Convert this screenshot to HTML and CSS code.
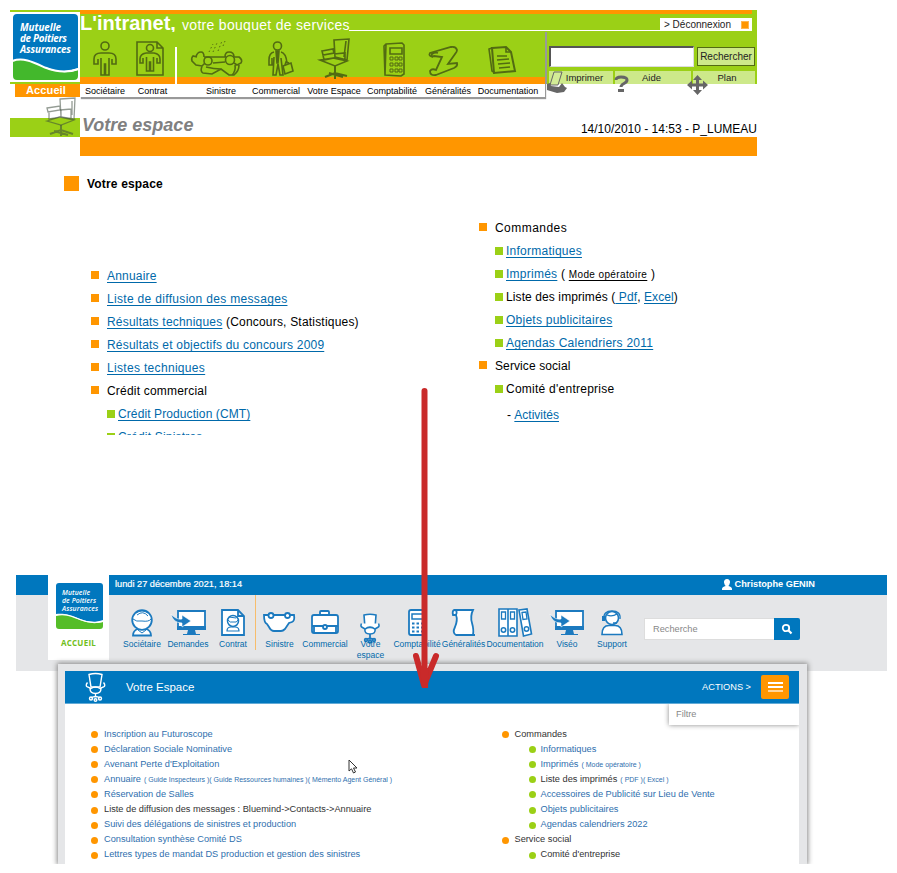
FILE: index.html
```html
<!DOCTYPE html>
<html lang="fr">
<head>
<meta charset="utf-8">
<title>Intranet - Votre espace</title>
<link rel="stylesheet" href="styles.css">
</head>
<body>
<section class="old">
  <header class="top">
    <div class="brand">
      <svg class="brand-logo" width="70" height="74" viewBox="10 10 70 74">
        <path fill="#9bd016" d="M10 10h70v2H10zM10 82h70v2H10z"/>
        <path fill="#0077be" d="M17 14H74q4 0 4 4V68C66 73 55 71 45 67C33 62 23 57 13 60V18q0-4 4-4z"/>
        <path fill="#43b82c" d="M13 61C23 57 33 62 45 68C55 72 66 74 78 70V76q0 4-4 4H17q-4 0-4-4z"/>
        <path fill="none" stroke="#fff" stroke-width="2" d="M12.500 61C23 57 33 62 45 67.500C55 71.500 66 73.500 78.500 69"/>
        <g class="logo-text">
          <text x="20" y="30.500" textLength="41">Mutuelle</text>
          <text x="20" y="42" textLength="47">de Poitiers</text>
          <text x="20" y="53" textLength="51">Assurances</text>
        </g>
      </svg>
      <div class="home">Accueil</div>
      <div class="chair-box">
        <svg width="70" height="40" viewBox="10 97 70 40" fill="none" stroke="#3d4a3d" stroke-opacity=".55" stroke-width="1.300">
          <path fill="#fff" fill-opacity=".5" d="M60 99l15-1-1 21-13-2zM47 108l13-2v4l-12 2zM49 112v7l12-2v-7"/>
          <path fill="#9bd016" fill-opacity=".5" d="M47 121l13-4 14 3-13 5z"/>
          <path d="M72 101v14M60 110l11-1v9"/>
          <path stroke-width="2" d="M61 125v6M50 134l11-4 12 4M61 131v5M54 131l14 4"/>
        </svg>
      </div>
    </div>
    <div class="mast">
      <div class="stripe"></div>
      <div class="titlebar">
        <strong>L'intranet,</strong><span class="tagline">votre bouquet de services</span>
        <i class="rule"></i>
        <div class="logout">&gt; Déconnexion <i></i></div>
      </div>
      <div class="mast-row">
        <nav class="onav">
          <a class="w50"><svg width="50" height="52" viewBox="80 32 50 52"><circle cx="105" cy="46" r="4"/><path d="M101 53h8q7 0 7 6v5h-4v-5M101 53q-7 0-7 6v5h4v-5M101 58v17h3.500V64h1v11h3.500V58"/></svg><span>Sociétaire</span></a>
          <a class="w45"><svg width="45" height="52" viewBox="130 32 45 52"><path d="M137 42h20l6 6v27h-26zM157 42v6h6"/><circle cx="150" cy="48" r="3.500"/><path d="M146 53h8q6 1 6 6v4h-3v-5M146 53q-6 1-6 6v4h3v-5M146.500 57v14h3V62h1v9h3V57"/></svg><span>Contrat</span></a>
          <i class="sep"></i>
          <a class="w71"><svg width="71" height="52" viewBox="177 32 71 52"><path d="M204 57h22M197 57l-4-1q-2 2-1 5l4 4 6 1 3-3M196 57q1-5 5-5 3 0 3 5M225 57q0-5 4-5 5 0 5 5h5q4 3 2 6l-4 2-3-2M202 66q-2 6 1 7l9 1 9-5 8 6h5q5-4 5-10M213 63l12-1M206 67q8 2 15 2M232 75q4-4 3-10"/><circle cx="208" cy="61" r="4"/><circle cx="230" cy="60" r="4.500"/><path stroke-dasharray="1.500 2.500" stroke-width="1" d="M209 52l4-8M213 52l4-9M218 51l4-10M223 46l2-5"/></svg><span class="shift">Sinistre</span></a>
          <a class="w56"><svg width="56" height="52" viewBox="248 32 56 52"><circle cx="277.500" cy="46" r="4"/><path d="M274 52q-5 1-5 8v5h3v-7M281 52q5 1 6 11M274 57l-1 18h3l2-11 2 11h3l-2-17"/><path fill="#526b12" d="M276 51h3l-1 12h-1z"/><path d="M283 66l8-3 2 8-8 3zM285 65l1-3 3 1"/></svg><span>Commercial</span></a>
          <a class="w60"><svg width="60" height="52" viewBox="304 32 60 52"><path d="M334 40l15-1-2 21-12-3zM346 41l-2 16M322 51l11-2 1 4-11 2zM323 55l1 5 10-2M320 60l13-2 14 3-12 5zM334 54l11-1v6"/><path stroke-width="2" d="M335 66v7M325 77l10-4 12 3M335 72v7M329 73l14 4"/></svg><span>Votre Espace</span></a>
          <a class="w56"><svg width="56" height="52" viewBox="364 32 56 52"><path d="M386 44l16-1 2 2v29l-3 2-16-1-1-29zM386 44l-1 31M390 48h12v6h-12z"/><path stroke-width="1" d="M390 57h3v3h-3zM395 57h3v3h-3zM399 57h3v3h-3zM390 63h3v3h-3zM395 63h3v3h-3zM399 63h3v3h-3zM390 69h3v3h-3zM395 69h3v3h-3zM399 69h3v3h-3z"/></svg><span>Comptabilité</span></a>
          <a class="w56"><svg width="56" height="52" viewBox="420 32 56 52"><path stroke-width="1.800" d="M433 57q-5-1-3-4l21-6q5-1 6 3 0 2-2 4l-7 10 9-1q1 3-3 5l-18 7q-6 1-6-4 2-3 6-1l6-13-8-1q-3 2-2-2 3-2 6-1"/></svg><span>Généralités</span></a>
          <a class="w64"><svg width="64" height="52" viewBox="476 32 64 52"><path stroke-width="2" d="M492 48l14-1 5 5 4 19-21 2z"/><path d="M492 48l-3 1 3 22 3 2M506 47v5h5M497 56h10M497 60l12-1M498 64l12-1M499 68l11-1"/></svg><span>Documentation</span></a>
        </nav>
        <div class="tools">
          <div class="find"><div class="find-box"></div><button>Rechercher</button></div>
          <div class="tabs"><span>Imprimer</span><span>Aide</span><span>Plan</span></div>
          <svg class="tool-icons" width="210" height="28" viewBox="547 70 210 28">
            <path fill="#d3ec96" stroke="#666" stroke-width="1" d="M554 72l8 0-4 13-8 0z"/>
            <path fill="#666" d="M547 84l3-1 1 3 8 1 3-4 3 4 2 1-3 4-7 1-10-3z"/>
            <path fill="none" stroke="#666" stroke-width="3" d="M616 80q0-3 5-3 6 0 6 3c0 4-6 3-6 7"/><path fill="#666" d="M618 89h6v3h-6z"/>
            <path fill="#666" d="M697.500 75l4.500 5h-3v3.500h4v-3l5 4.500-5 4.500v-3h-4v3.500h3l-4.500 5-4.500-5h3v-3.500h-4v3l-5-4.500 5-4.500v3h4V80h-3z"/>
          </svg>
        </div>
      </div>
      <div class="crumb"><h1>Votre espace</h1><p>14/10/2010 - 14:53 - P_LUMEAU</p></div>
    </div>
  </header>
  <div class="bar"></div>
  <h2><i></i>Votre espace</h2>
  <div class="cols">
    <ul class="left">
      <li><a>Annuaire</a></li>
      <li class="wide"><a>Liste de diffusion des messages</a></li>
      <li><a>Résultats techniques</a>&nbsp;(Concours, Statistiques)</li>
      <li><a>Résultats et objectifs du concours 2009</a></li>
      <li class="wide"><a>Listes techniques</a></li>
      <li>Crédit commercial</li>
      <li class="sub tight"><a>Crédit Production (CMT)</a></li>
      <li class="sub"><a>Crédit Sinistres</a></li>
    </ul>
    <ul class="right">
      <li class="wider">Commandes</li>
      <li class="sub"><a>Informatiques</a></li>
      <li class="sub"><a>Imprimés</a>&nbsp;(&nbsp;<a class="mini">Mode opératoire</a>&nbsp;)</li>
      <li class="sub tight">Liste des imprimés (<a>&nbsp;Pdf</a>,&nbsp;<a>Excel</a>)</li>
      <li class="sub"><a>Objets publicitaires</a></li>
      <li class="sub"><a>Agendas Calendriers 2011</a></li>
      <li class="tight">Service social</li>
      <li class="sub">Comité d'entreprise</li>
      <li class="dash">-&nbsp;<a>Activités</a></li>
    </ul>
  </div>
</section>

<section class="new">
  <header class="head">
    <div class="card">
      <svg width="61" height="60" viewBox="48 575 61 60">
        <path fill="#0077be" d="M59 583H100q3 0 3 3V620C95 623 88 622 80 619C70 615 64 613 56 614V586q0-3 3-3z"/>
        <path fill="#55bd28" d="M56 615.500C64 613 71 616 80 620C88 623 95 624 103 622V626q0 3-3 3H59q-3 0-3-3z"/>
        <path fill="none" stroke="#fff" stroke-width="1.200" d="M56 615.500C64 613 71 616 80 619.500C88 623 95 623.500 103 621.500"/>
        <g class="logo-text small">
          <text x="62" y="595" textLength="28">Mutuelle</text>
          <text x="62" y="603" textLength="34">de Poitiers</text>
          <text x="62" y="610.500" textLength="36">Assurances</text>
        </g>
      </svg>
      <b>ACCUEIL</b>
    </div>
    <div class="head-main">
      <div class="bluebar">
        <span>lundi 27 décembre 2021, 18:14</span>
        <b><svg width="10" height="11" viewBox="0 0 10 11"><path fill="#fff" d="M5 0a3 3 0 0 1 3 3.500Q7.500 6 6.300 7q3.700.8 3.700 3v1H0v-1q0-2.200 3.700-3Q2.500 6 2 3.500A3 3 0 0 1 5 0z"/></svg>Christophe GENIN</b>
      </div>
      <div class="greybar">
        <nav class="nnav">
          <a class="n46"><svg width="46" height="44" viewBox="119 595 46 44"><path d="M133 635.500q0-5 5-6.500h8q5 1.500 5 6.500z"/><circle cx="142" cy="620" r="9.800"/><path fill="none" stroke-width="1" d="M133 619q3 3 9 2 7 1 9-2M137 615q6-5 11 1M136 613q6-4 12 0M138 630l4 3 4-3"/></svg><span>Sociétaire</span></a>
          <a class="n46"><svg width="46" height="44" viewBox="165 595 46 44"><path d="M178 611h27v18h-27z"/><path class="fill" d="M177 626h29v4h-29zM188 630h7l1 4h4v1h-17v-1h4z"/><path class="fill halo" d="M171 614q5 6 11 5v-4l9 6-9 6v-4q-9 0-11-9z"/></svg><span>Demandes</span></a>
          <a class="n44"><svg width="44" height="44" viewBox="211 595 44 44"><path d="M222 610h16l6 6v19h-22zM238 610v6h6"/><path stroke-width="1.200" d="M227 631q0-4 4-4h4q4 0 4 4z"/><circle stroke-width="1.500" cx="233" cy="621" r="5.500"/><path stroke-width="1" fill="none" d="M228 620q2 3 5 2 4 1 5-2M229 617l7 1"/></svg><span>Contrat</span></a>
          <i></i>
          <a class="n45"><svg width="45" height="44" viewBox="257 595 45 44"><path d="M264 615h30q1 6-2 7l-3 1-4 6q-2 2-4 2h-7q-3 0-5-4l-2-3q-3-1-3-9z"/><circle cx="271" cy="615.500" r="2.500"/><circle cx="287.500" cy="615.500" r="2.500"/></svg><span>Sinistre</span></a>
          <a class="n46"><svg width="46" height="44" viewBox="302 595 46 44"><path d="M320 615v-3q0-1 1-1h7q1 0 1 1v3"/><rect x="312" y="615" width="26" height="18" rx="2"/><path fill="none" d="M312 626h26M314 626v7M336 626v7"/><circle cx="325" cy="627" r="2"/></svg><span>Commercial</span></a>
          <a class="n45"><svg width="45" height="44" viewBox="348 595 45 44"><path stroke-width="1.600" d="M364 615q6-1.500 12 0l-1 13h-10z"/><path stroke-width="1.600" d="M361.500 623.500q-1.500 3 1 4l2.500 1.500q5-4 10 0l2.500-1.500q2.500-1 1-4M365 629q-1 5 5 5t5-5q-5-3-10 0z"/><path fill="none" d="M370 634v5M365 640q5-3 10 0"/><circle cx="366" cy="640" r="1.300"/><circle cx="370" cy="641.500" r="1.300"/><circle cx="374" cy="640" r="1.300"/></svg><span>Votre<br>espace</span></a>
          <a class="n48"><svg width="48" height="44" viewBox="393 595 48 44"><rect x="409" y="610" width="17" height="25" rx="2"/><path stroke-width="1.500" d="M412 614h12v5h-12z"/><path class="dots" d="M412 623.500h12M412 627.500h12M412 631.500h12"/></svg><span>Comptabilité</span></a>
          <a class="n45"><svg width="45" height="44" viewBox="441 595 45 44"><path d="M454 610h19q-3 6-1 13t1 12h-17q-4-2-1-8 3-7 1-12h-3q-1-4 1-5z"/><path fill="none" d="M454 610q4 0 2 5M471 635h4"/></svg><span>Généralités</span></a>
          <a class="n58"><svg width="58" height="44" viewBox="486 595 58 44"><path stroke-width="1.600" d="M499 609h9v27h-9zM508 609h9v27h-9z"/><path stroke-width="1.600" d="M519 610l8-1 4.500 25-8 2z"/><path stroke-width="1.300" d="M501.500 612h4v7h-4zM510.500 612h4v7h-4zM522 612.500l4-.5 1 7-4 .5z"/><circle stroke-width="1.500" cx="503.500" cy="630" r="2.200"/><circle stroke-width="1.500" cx="512.500" cy="630" r="2.200"/><circle stroke-width="1.500" cx="526.500" cy="629" r="2.200"/></svg><span>Documentation</span></a>
          <a class="n46"><svg width="46" height="44" viewBox="544 595 46 44"><path d="M556 611h27v18h-27z"/><path class="fill" d="M555 626h29v4h-29zM566 630h7l1 4h4v1h-17v-1h4z"/><path class="fill halo" d="M550 614q5 6 11 5v-4l9 6-9 6v-4q-9 0-11-9z"/></svg><span>Viséo</span></a>
          <a class="n44"><svg width="44" height="44" viewBox="590 595 44 44"><path stroke-width="1.600" d="M602 634.500q0-9 7-9h6q7 0 7 9z"/><circle stroke-width="1.600" cx="612" cy="618" r="6.500"/><path stroke-width="1.300" fill="none" d="M604 619q-1-8 8-8t8 8M607 615q5 2 10-1M613 623h4"/><path class="fill" d="M602 616h3v5h-3z"/></svg><span>Support</span></a>
        </nav>
        <div class="search"><span>Recherche</span><button><svg width="10" height="10" viewBox="0 0 10 10" fill="none" stroke="#fff" stroke-width="1.800"><circle cx="4" cy="4" r="3.200"/><path stroke-width="2.200" d="M6.300 6.300l3.200 3.200"/></svg></button></div>
      </div>
    </div>
  </header>
  <main class="panel">
    <div class="panel-head">
      <svg width="22" height="30" viewBox="0 0 22 30" fill="none" stroke="#fff" stroke-width="1.400"><path d="M4 2.500q6.500-2 13 0l-2 12.500h-9z"/><path d="M2.500 10.500q-2.500 3 0 4.500l3.500 1.500q4.500-3 9 0l3.500-1.500q2.500-1.500 0-4.500M5 16.500q0 5 5.500 5t5.500-5M10.500 21.500v4M6 26q4.500-3 9 0"/><circle cx="6" cy="26.500" r="1.500"/><circle cx="10.500" cy="28" r="1.300"/><circle cx="15" cy="26.500" r="1.500"/></svg>
      <h3>Votre Espace</h3>
      <span>ACTIONS &gt;</span>
      <button><i></i><i></i><i></i></button>
      <div class="filter">Filtre</div>
    </div>
    <div class="panel-body">
      <ul>
        <li><a>Inscription au Futuroscope</a></li>
        <li><a>Déclaration Sociale Nominative</a></li>
        <li><a>Avenant Perte d'Exploitation</a></li>
        <li><a>Annuaire</a><small>( Guide Inspecteurs )( Guide Ressources humaines )( Mémento Agent Général )</small></li>
        <li><a>Réservation de Salles</a></li>
        <li>Liste de diffusion des messages : Bluemind-&gt;Contacts-&gt;Annuaire</li>
        <li><a>Suivi des délégations de sinistres et production</a></li>
        <li><a>Consultation synthèse Comité DS</a></li>
        <li><a>Lettres types de mandat DS production et gestion des sinistres</a></li>
      </ul>
      <ul>
        <li>Commandes</li>
        <li class="sub"><a>Informatiques</a></li>
        <li class="sub"><a>Imprimés</a><small>( Mode opératoire )</small></li>
        <li class="sub">Liste des imprimés<small>( PDF )( Excel )</small></li>
        <li class="sub"><a>Accessoires de Publicité sur Lieu de Vente</a></li>
        <li class="sub"><a>Objets publicitaires</a></li>
        <li class="sub"><a>Agendas calendriers 2022</a></li>
        <li>Service social</li>
        <li class="sub">Comité d'entreprise</li>
      </ul>
    </div>
  </main>
</section>

<svg class="arrow" width="32" height="302" viewBox="409 388 32 302" fill="none" stroke="#c92a2a" stroke-linecap="round">
  <path stroke-width="6" d="M424.500 391V684"/>
  <path stroke-width="6" stroke-linejoin="round" d="M416 656L424 685L436 656"/>
  <path fill="#c92a2a" stroke="none" d="M420 668h9l-1 20h-6z"/>
</svg>
<svg class="cursor" width="10" height="16" viewBox="0 0 10 16"><path fill="#fff" stroke="#333" d="M1 1v11l2.500-2.200L5.500 14l2-1-2-4H9z"/></svg>
</body>
</html>
```
FILE: styles.css
```css
* { box-sizing: border-box; }
body {
  position: relative;
  margin: 0;
  width: 897px;
  height: 873px;
  overflow: hidden;
  background: #fff;
  color: #000;
  font: 12px "Liberation Sans", Arial, sans-serif;
}
h1, h2, h3, p, ul { margin: 0; padding: 0; }
ul { list-style: none; }
svg { display: block; overflow: visible; }
button { border: 0; padding: 0; font: inherit; }
.logo-text { font: italic 700 9.800px "Open Sans", "Noto Sans", sans-serif; fill: #fff; }
.logo-text.small { font-size: 6.800px; font-weight: 600; }

/* Former intranet */
.old { margin: 10px 0 0 10px; width: 747px; height: 425px; overflow: hidden; }
.top { display: flex; height: 127px; }
.brand { width: 70px; }
.home {
  margin-left: 5px;
  height: 13px;
  line-height: 13px;
  padding-right: 3px;
  text-align: center;
  background: #ff9600;
  color: #fff;
  font-size: 11px;
  font-weight: bold;
  letter-spacing: .1px;
}
.chair-box { height: 40px; background: linear-gradient(#fff 21px, #9bd016 21px); }
.mast { width: 677px; }
.stripe { height: 4px; background: linear-gradient(90deg, #ff9600 672px, #9bd016 672px); }
.titlebar { display: flex; height: 18px; padding-right: 5px; background: #9bd016; color: #fff; white-space: nowrap; }
.titlebar strong { width: 102px; font-size: 20px; line-height: 19px; }
.tagline { width: 167px; font-size: 14px; line-height: 22px; letter-spacing: .3px; }
.rule { flex: 1; height: 1px; margin-top: 16px; background: #fff; }
.logout {
  display: flex;
  align-items: center;
  justify-content: space-between;
  width: 92px;
  height: 13px;
  margin-top: 4px;
  padding: 0 3px 0 4px;
  background: #fff;
  color: #222;
  font-size: 10px;
}
.logout i { width: 8px; height: 8px; background: #ff9600; border: 1px solid #ffb650; }
.mast-row { display: flex; height: 67px; }
.onav {
  display: flex;
  width: 465px;
  height: 65px;
  background: linear-gradient(#9bd016 45px, #ff9600 45px, #ff9600 52px, #fff 52px);
  box-shadow: 1px 2px 1px #999;
  position: relative;
  z-index: 1;
}
.onav a { text-align: center; white-space: nowrap; }
.onav svg { fill: none; stroke: #526b12; stroke-width: 1.600; }
.onav span { display: block; font-size: 9px; line-height: 14px; }
.onav .shift { padding-left: 17px; }
.sep { width: 2px; height: 37px; margin-top: 15px; background: #fff; }
.w45 { width: 45px; } .w50 { width: 50px; } .w56 { width: 56px; }
.w60 { width: 60px; } .w64 { width: 64px; } .w71 { width: 71px; }
.tools { position: relative; z-index: 2; width: 212px; height: 52px; padding: 14px 2px 0 4px; background: linear-gradient(90deg, #999 2px, #9bd016 2px); }
.find { display: flex; align-items: center; justify-content: space-between; height: 21px; }
.find-box { width: 145px; height: 21px; background: #fff; border: solid #555; border-width: 2px 1px 1px 2px; border-right-color: #ddd; border-bottom-color: #ddd; }
.find button { width: 58px; height: 19px; border: 1px solid #526b12; background: #cde98a; color: #222; font-size: 10px; }
.tabs { display: flex; gap: 2px; height: 13px; margin-top: 4px; }
.tabs span { background: #cde98a; font-size: 9.500px; line-height: 14px; text-align: center; color: #222; }
.tabs span:nth-child(1) { width: 64px; padding-left: 7px; }
.tabs span:nth-child(2) { width: 76px; padding-right: 3px; }
.tabs span:nth-child(3) { width: 62px; padding-left: 6px; }
.tool-icons { position: absolute; left: 2px; top: 38px; }
.crumb { display: flex; justify-content: space-between; height: 38px; padding-left: 2px; }
.crumb h1 { font-size: 18px; font-style: italic; line-height: 52px; color: #808080; }
.crumb p { line-height: 61px; }
.bar { height: 19px; margin-left: 70px; background: #ff9600; }
.old h2 { display: flex; align-items: center; gap: 8px; height: 15px; margin: 20px 0 0 54px; font-size: 12px; letter-spacing: .17px; }
.old h2 i { width: 15px; height: 15px; background: #ff9600; }
.cols { display: flex; justify-content: space-between; padding: 25px 47px 0 81px; }
.left { width: 388px; padding-top: 48px; letter-spacing: .2px; }
.right { width: 231px; letter-spacing: .25px; }
.cols li { display: flex; align-items: center; height: 23px; white-space: nowrap; }
.cols li::before { content: ""; width: 8px; height: 8px; margin: 0 8px 1px 0; background: #ff9600; }
.cols .sub::before { margin: 1px 3px 0 16px; background: #9bd016; }
.cols .wide { letter-spacing: .32px; }
.cols .wider { letter-spacing: .45px; }
.cols .tight { letter-spacing: .1px; }
.cols .dash { height: 29px; padding-left: 28px; letter-spacing: 0; }
.cols .dash::before { display: none; }
.cols a { color: #0069aa; text-decoration: underline; text-underline-offset: 2px; text-decoration-skip-ink: none; }
.cols .mini { margin-top: 2px; color: #000; font-size: 10px; letter-spacing: .38px; }

/* Current intranet */
.new { margin: 140px 0 0 16px; width: 871px; height: 289px; font-size: 9.230px; color: #333; }
.head { display: flex; height: 96px; padding-left: 32px; background: linear-gradient(#0077be 20px, #e5e6e8 20px); }
.card { width: 61px; height: 85px; background: #fff; text-align: center; }
.card b { display: block; color: #6fbe20; font: 700 8px/16px "Open Sans", sans-serif; letter-spacing: .25px; }
.head-main { width: 778px; }
.bluebar { display: flex; justify-content: space-between; height: 20px; padding: 0 72px 0 6px; line-height: 19px; color: #fff; }
.bluebar span { -webkit-text-stroke: .2px #fff; }
.bluebar b { display: flex; align-items: center; gap: 3px; height: 18px; }
.greybar { display: flex; padding-left: 10px; }
.nnav { display: flex; width: 525px; color: #0069aa; font-size: 8.500px; }
.nnav a { text-align: center; white-space: nowrap; }
.nnav span { display: block; position: relative; line-height: 11px; }
.nnav svg { fill: #fff; stroke: #1c7abf; stroke-width: 1.800; }
.nnav .fill { fill: #1c7abf; stroke: none; }
.nnav .halo { stroke: #fff; stroke-width: .6; }
.nnav .dots { stroke-dasharray: 2.500 2; }
.nnav i { width: 1px; height: 55px; margin-right: 1px; background: #f7bd6c; }
.n44 { width: 44px; } .n45 { width: 45px; } .n46 { width: 46px; } .n48 { width: 48px; } .n58 { width: 58px; }
.search { display: flex; width: 156px; height: 22px; margin-top: 23px; background: #fff; border: 1px solid #ddd; color: #888; line-height: 20px; }
.search span { flex: 1; padding-left: 8px; }
.search button { display: grid; place-items: center; width: 26px; height: 22px; margin: -1px -1px 0 0; background: #0077be; border-radius: 0 2px 2px 0; }
.panel {
  position: relative;
  width: 749px;
  height: 200px;
  margin: -7px 0 0 42px;
  border: solid #e5e6e8;
  border-width: 7px 8px 0 7px;
  background: #fff;
  box-shadow: 0 0 5px 1px #888;
  clip-path: inset(-9px -9px 0 -9px);
}
.panel-head { position: relative; display: flex; align-items: center; height: 33px; padding: 0 10px 0 20px; background: #0077be; border-bottom: 1px solid #62abd7; color: #fff; }
.panel-head h3 { flex: 1; margin-left: 19px; font-size: 11.500px; font-weight: normal; }
.panel-head > button { display: grid; align-content: center; justify-items: center; gap: 2px; width: 28px; height: 24px; margin-left: 10px; border-radius: 2px; background: #ff9600; }
.panel-head button i { width: 15px; height: 2px; background: #fff; }
.panel-head button i:last-child { opacity: .6; }
.filter { position: absolute; right: 0; top: 33px; width: 130px; height: 21px; padding-left: 7px; line-height: 21px; background: #fff; color: #888; box-shadow: 0 0 5px #888; clip-path: inset(0 0 -7px -7px); }
.panel-body { display: flex; padding: 22px 0 0 26px; }
.panel-body ul:first-child { width: 410.500px; }
.panel-body li { display: flex; align-items: center; height: 15.100px; white-space: nowrap; }
.panel-body li::before { content: ""; width: 7px; height: 7px; margin: 2px 6px 0 0; border-radius: 50%; background: #ff9600; }
.panel-body .sub { padding-left: 27px; }
.panel-body .sub::before { background: #9bd016; margin-right: 5px; }
.panel-body a, .panel-body small { color: #2f6fae; }
.panel-body small { margin: 1px 0 0 3px; font-size: 7px; }
.arrow { position: absolute; left: 409px; top: 388px; }
.cursor { position: absolute; left: 348px; top: 759px; }
```
